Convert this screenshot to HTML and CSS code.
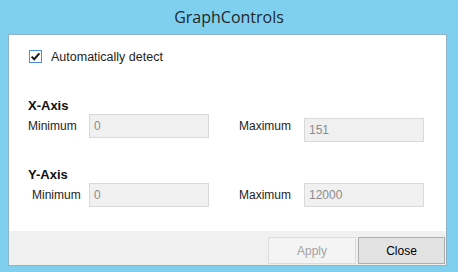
FILE: index.html
```html
<!DOCTYPE html>
<html>
<head>
    <title>GraphControls</title>
    <meta name="viewport" content="width=device-width, initial-scale=1">
    <link rel="stylesheet" href="styles.css">
</head>
<body>
    <div class="window">
        <div class="titlebar">GraphControls</div>
        <div class="client">
            <div class="content">
                <label class="auto">
                    <span class="checkbox">
                        <svg width="13" height="13" viewBox="0 0 13 13">
                            <rect x="0.5" y="0.5" width="12" height="12" fill="#fff" stroke="#4a8fd8"/>
                            <path d="M2.6 6.6 L5.2 9.2 L10.4 3.4" fill="none" stroke="#1a1a1a" stroke-width="2"/>
                        </svg>
                    </span>
                    Automatically detect
                </label>

                <div class="axis-title x-title">X-Axis</div>
                <div class="axis-row x-row">
                    <span class="label">Minimum</span>
                    <span class="field">0</span>
                    <span class="label max-label">Maximum</span>
                    <span class="field max-field">151</span>
                </div>

                <div class="axis-title y-title">Y-Axis</div>
                <div class="axis-row y-row">
                    <span class="label indent">Minimum</span>
                    <span class="field">0</span>
                    <span class="label max-label">Maximum</span>
                    <span class="field">12000</span>
                </div>
            </div>
            <div class="footer">
                <button class="btn" disabled>Apply</button>
                <button class="btn">Close</button>
            </div>
        </div>
    </div>
</body>
</html>
```

FILE: styles.css
```css
body {
    margin: 0;
    padding: 0;
    background-color: #7fd0ef;
    font-family: "Liberation Sans", Arial, sans-serif;
    font-size: 12px;
    color: #1e1e1e;
}
.window {
    width: 458px;
    height: 272px;
    overflow: hidden;
}
.titlebar {
    height: 34px;
    line-height: 34px;
    text-align: center;
    font-family: "Open Sans", "Noto Sans", sans-serif;
    font-size: 16px;
    color: #22282c;
}
.client {
    margin: 0 11px 0 8px;
    height: 230px;
    border: 1px solid #8fb2c6;
    background-color: #f0f0f0;
}
.content {
    height: 196px;
    box-sizing: border-box;
    padding: 15px 0 0 19px;
    background-color: #fff;
}
.auto {
    display: flex;
    align-items: center;
    height: 13px;
    padding-left: 1px;
    font-size: 12.5px;
}
.checkbox {
    display: inline-block;
    width: 13px;
    height: 13px;
    margin-right: 9px;
}
.checkbox svg {
    display: block;
}
.axis-title {
    height: 16px;
    line-height: 16px;
    font-weight: bold;
    font-size: 13px;
    color: #111;
}
.x-title {
    margin-top: 35px;
}
.y-title {
    margin-top: 25px;
}
.axis-row {
    display: flex;
    align-items: flex-start;
}
.x-row {
    height: 28px;
}
.label {
    width: 61px;
    line-height: 24px;
}
.label.indent {
    width: 57px;
    padding-left: 4px;
}
.max-label {
    width: 65px;
    margin-left: 30px;
}
.field {
    width: 120px;
    height: 24px;
    line-height: 22px;
    box-sizing: border-box;
    padding-left: 4px;
    border: 1px solid #d9d9d9;
    background-color: #f0f0f0;
    color: #8c8c8c;
}
.max-field {
    margin-top: 4px;
}
.footer {
    display: flex;
    justify-content: flex-end;
    gap: 2px;
    padding: 6px 0 0 0;
}
.btn {
    width: 88px;
    height: 27px;
    margin: 0;
    padding: 0;
    font-family: "Liberation Sans", Arial, sans-serif;
    font-size: 12px;
    color: #000;
    background-color: #e3e3e3;
    border: 1px solid #adadad;
}
.btn:last-child {
    width: 87px;
    margin-right: 1px;
}
.btn:disabled {
    color: #a3a3a3;
    background-color: #f4f4f4;
    border-color: #dcdcdc;
}
```
